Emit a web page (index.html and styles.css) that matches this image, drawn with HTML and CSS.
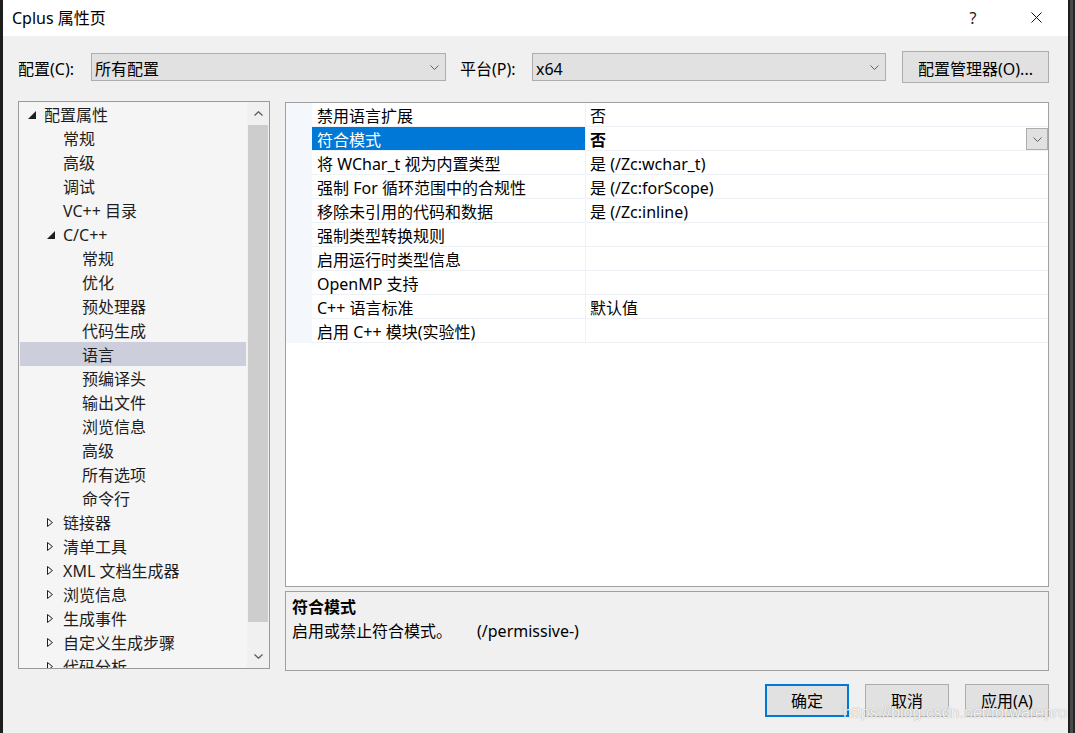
FILE: index.html
```html
<!DOCTYPE html>
<html lang="zh-CN">
<head>
<meta charset="UTF-8">
<title>Cplus 属性页</title>
<link rel="stylesheet" href="styles.css">
</head>
<body>

<div class="desktop">
  <div class="window">
    <div class="titlebar">
      <span class="title">Cplus 属性页</span>
      <span class="help">?</span>
      <span class="close">
        <svg width="11" height="11" viewBox="0 0 11 11"><path d="M0.5 0.5L10.5 10.5M10.5 0.5L0.5 10.5" stroke="#111" stroke-width="1" fill="none"/></svg>
      </span>
    </div>

    <div class="config-row">
      <span class="label">配置(C):</span>
      <div class="combo combo-config">
        <span class="combo-text">所有配置</span>
        <svg class="chev" width="9" height="5" viewBox="0 0 9 5"><path d="M0.5 0.5L4.5 4.5L8.5 0.5" fill="none" stroke="#606060"/></svg>
      </div>
      <span class="label platform-label">平台(P):</span>
      <div class="combo combo-platform">
        <span class="combo-text">x64</span>
        <svg class="chev" width="9" height="5" viewBox="0 0 9 5"><path d="M0.5 0.5L4.5 4.5L8.5 0.5" fill="none" stroke="#606060"/></svg>
      </div>
      <button class="btn btn-manager">配置管理器(O)...</button>
    </div>

    <div class="main">
      <div class="tree">
        <ul class="tree-list">
          <li class="node lv0"><span class="arrow"><svg width="8" height="8" viewBox="0 0 8 8"><path d="M8 0V8H0Z" fill="#1e1e1e"/></svg></span>配置属性</li>
          <li class="node lv1"><span class="arrow"></span>常规</li>
          <li class="node lv1"><span class="arrow"></span>高级</li>
          <li class="node lv1"><span class="arrow"></span>调试</li>
          <li class="node lv1"><span class="arrow"></span>VC++ 目录</li>
          <li class="node lv1"><span class="arrow"><svg width="8" height="8" viewBox="0 0 8 8"><path d="M8 0V8H0Z" fill="#1e1e1e"/></svg></span>C/C++</li>
          <li class="node lv2"><span class="arrow"></span>常规</li>
          <li class="node lv2"><span class="arrow"></span>优化</li>
          <li class="node lv2"><span class="arrow"></span>预处理器</li>
          <li class="node lv2"><span class="arrow"></span>代码生成</li>
          <li class="node lv2 selected"><span class="arrow"></span>语言</li>
          <li class="node lv2"><span class="arrow"></span>预编译头</li>
          <li class="node lv2"><span class="arrow"></span>输出文件</li>
          <li class="node lv2"><span class="arrow"></span>浏览信息</li>
          <li class="node lv2"><span class="arrow"></span>高级</li>
          <li class="node lv2"><span class="arrow"></span>所有选项</li>
          <li class="node lv2"><span class="arrow"></span>命令行</li>
          <li class="node lv1"><span class="arrow"><svg width="7" height="9" viewBox="0 0 7 9"><path d="M0.5 0.5L5.5 4.5L0.5 8.5Z" fill="none" stroke="#1e1e1e"/></svg></span>链接器</li>
          <li class="node lv1"><span class="arrow"><svg width="7" height="9" viewBox="0 0 7 9"><path d="M0.5 0.5L5.5 4.5L0.5 8.5Z" fill="none" stroke="#1e1e1e"/></svg></span>清单工具</li>
          <li class="node lv1"><span class="arrow"><svg width="7" height="9" viewBox="0 0 7 9"><path d="M0.5 0.5L5.5 4.5L0.5 8.5Z" fill="none" stroke="#1e1e1e"/></svg></span>XML 文档生成器</li>
          <li class="node lv1"><span class="arrow"><svg width="7" height="9" viewBox="0 0 7 9"><path d="M0.5 0.5L5.5 4.5L0.5 8.5Z" fill="none" stroke="#1e1e1e"/></svg></span>浏览信息</li>
          <li class="node lv1"><span class="arrow"><svg width="7" height="9" viewBox="0 0 7 9"><path d="M0.5 0.5L5.5 4.5L0.5 8.5Z" fill="none" stroke="#1e1e1e"/></svg></span>生成事件</li>
          <li class="node lv1"><span class="arrow"><svg width="7" height="9" viewBox="0 0 7 9"><path d="M0.5 0.5L5.5 4.5L0.5 8.5Z" fill="none" stroke="#1e1e1e"/></svg></span>自定义生成步骤</li>
          <li class="node lv1"><span class="arrow"><svg width="7" height="9" viewBox="0 0 7 9"><path d="M0.5 0.5L5.5 4.5L0.5 8.5Z" fill="none" stroke="#1e1e1e"/></svg></span>代码分析</li>
        </ul>
        <div class="vscroll">
          <div class="sb-btn"><svg width="9" height="5" viewBox="0 0 9 5"><path d="M0.5 4.5L4.5 0.8L8.5 4.5" fill="none" stroke="#606060" stroke-width="1.4"/></svg></div>
          <div class="sb-track"><div class="sb-thumb"></div></div>
          <div class="sb-btn"><svg width="9" height="5" viewBox="0 0 9 5"><path d="M0.5 0.5L4.5 4.2L8.5 0.5" fill="none" stroke="#606060" stroke-width="1.4"/></svg></div>
        </div>
      </div>

      <div class="right">
        <div class="grid">
          <div class="prop-row"><span class="gutter"></span><span class="name">禁用语言扩展</span><span class="value">否</span></div>
          <div class="prop-row active"><span class="gutter"></span><span class="name">符合模式</span><span class="value">否<span class="drop"><svg width="9" height="5" viewBox="0 0 9 5"><path d="M0.5 0.5L4.5 4.5L8.5 0.5" fill="none" stroke="#606060"/></svg></span></span></div>
          <div class="prop-row"><span class="gutter"></span><span class="name">将 WChar_t 视为内置类型</span><span class="value">是 (/Zc:wchar_t)</span></div>
          <div class="prop-row"><span class="gutter"></span><span class="name">强制 For 循环范围中的合规性</span><span class="value">是 (/Zc:forScope)</span></div>
          <div class="prop-row"><span class="gutter"></span><span class="name">移除未引用的代码和数据</span><span class="value">是 (/Zc:inline)</span></div>
          <div class="prop-row"><span class="gutter"></span><span class="name">强制类型转换规则</span><span class="value"></span></div>
          <div class="prop-row"><span class="gutter"></span><span class="name">启用运行时类型信息</span><span class="value"></span></div>
          <div class="prop-row"><span class="gutter"></span><span class="name">OpenMP 支持</span><span class="value"></span></div>
          <div class="prop-row"><span class="gutter"></span><span class="name">C++ 语言标准</span><span class="value">默认值</span></div>
          <div class="prop-row"><span class="gutter"></span><span class="name">启用 C++ 模块(实验性)</span><span class="value"></span></div>
        </div>
        <div class="desc">
          <div class="desc-title">符合模式</div>
          <div class="desc-text">启用或禁止符合模式。<span class="desc-switch">(/permissive-)</span></div>
        </div>
      </div>
    </div>

    <div class="actions">
      <button class="btn btn-action btn-default">确定</button>
      <button class="btn btn-action">取消</button>
      <button class="btn btn-action">应用(A)</button>
    </div>
  </div>

  <div class="watermark">https://blog.csdn.net/forwarepro</div>
</div>

</body>
</html>
```

FILE: styles.css
```css
/* General */
* {
  box-sizing: border-box;
}

body {
  margin: 0;
  background-color: #1e1e1e;
  font-family: "Noto Sans", "Noto Sans CJK SC", sans-serif;
  font-size: 16px;
  color: #000;
}

.desktop {
  position: relative;
  width: 1075px;
  height: 733px;
  overflow: hidden;
  background: linear-gradient(to right, #1e1e1e 1070px, #4a4a4a 1070px, #4a4a4a 1073px, #262626 1073px);
}

.window {
  margin-left: 3px;
  width: 1065px;
  height: 733px;
  background-color: #f0f0f0;
}

/* Title bar */
.titlebar {
  height: 36px;
  background-color: #fff;
  display: flex;
  align-items: center;
  padding: 0 0 1px 9px;
}

.title {
  flex: 1;
  line-height: 20px;
}

.help {
  width: 30px;
  margin-right: 25px;
  text-align: center;
  line-height: 20px;
  color: #222;
}

.close {
  width: 46px;
  margin-right: 9px;
  display: flex;
  justify-content: center;
}

/* Config row */
.config-row {
  display: flex;
  align-items: center;
  height: 32px;
  margin-top: 15px;
  padding-left: 15px;
}

.label {
  width: 73px;
  line-height: 20px;
  padding-top: 3px;
}

.platform-label {
  margin-left: 14px;
  width: 72px;
}

.combo {
  height: 28px;
  display: flex;
  align-items: center;
  background-color: #e1e1e1;
  border: 1px solid #adadad;
  padding: 0 6px 0 3px;
}

.combo-text {
  flex: 1;
  line-height: 20px;
  padding-top: 4px;
}

.combo-config {
  width: 355px;
}

.combo-platform {
  width: 354px;
}

.btn {
  font-family: inherit;
  font-size: 16px;
  color: #000;
  background-color: #e1e1e1;
  border: 1px solid #adadad;
  padding: 0;
  line-height: 20px;
}

.btn-manager {
  margin-left: 16px;
  width: 147px;
  height: 32px;
  padding-top: 3px;
}

/* Main area */
.main {
  display: flex;
  margin-top: 18px;
  padding-left: 15px;
  height: 570px;
}

.tree {
  width: 252px;
  height: 568px;
  border: 1px solid #9a9a9a;
  background-color: #f5f5f5;
  display: flex;
}

.tree-list {
  flex: 1;
  margin: 0;
  padding: 0;
  list-style: none;
  overflow: hidden;
}

.node {
  height: 24px;
  line-height: 24px;
  padding-top: 1px;
  margin: 0 1px;
  display: flex;
  align-items: center;
  white-space: nowrap;
  color: #1e1e1e;
}

.node.lv0 { padding-left: 8px; }
.node.lv1 { padding-left: 27px; }
.node.lv2 { padding-left: 46px; }

.node.selected {
  background-color: #cccedb;
}

.arrow {
  width: 16px;
  height: 23px;
  display: flex;
  align-items: center;
  flex-shrink: 0;
}

.arrow svg {
  display: block;
}

.vscroll {
  width: 22px;
  display: flex;
  flex-direction: column;
  background-color: #f0f0f0;
}

.sb-btn {
  height: 23px;
  display: flex;
  align-items: center;
  justify-content: center;
}

.sb-track {
  flex: 1;
}

.sb-thumb {
  height: 497px;
  margin: 0 1px;
  background-color: #cdcdcd;
}

/* Property grid */
.right {
  margin-left: 15px;
  margin-top: 1px;
  width: 764px;
  display: flex;
  flex-direction: column;
}

.grid {
  height: 485px;
  border: 1px solid #a0a0a0;
  background-color: #fff;
}

.prop-row {
  display: flex;
  height: 24px;
}

.gutter {
  width: 26px;
  background-color: #f4f7fb;
}

.name {
  width: 274px;
  padding-left: 5px;
  padding-top: 4px;
  line-height: 19px;
  border-right: 1px solid #eef1f6;
  border-bottom: 1px solid #eef1f6;
  white-space: nowrap;
}

.value {
  flex: 1;
  display: flex;
  padding-left: 4px;
  padding-top: 4px;
  line-height: 19px;
  border-bottom: 1px solid #eef1f6;
  white-space: nowrap;
}

.prop-row.active .name {
  background-color: #0078d7;
  color: #fff;
}

.prop-row.active .value {
  font-weight: bold;
}

.drop {
  margin-left: auto;
  margin-top: -3px;
  width: 22px;
  height: 22px;
  display: flex;
  align-items: center;
  justify-content: center;
  background-color: #e1e1e1;
  border: 1px solid #adadad;
}

/* Description */
.desc {
  margin-top: 4px;
  height: 80px;
  border: 1px solid #a0a0a0;
  padding: 3px 6px;
}

.desc-title {
  font-weight: bold;
  line-height: 24px;
}

.desc-text {
  line-height: 24px;
}

.desc-switch {
  margin-left: 25px;
}

/* Buttons */
.actions {
  display: flex;
  justify-content: flex-end;
  gap: 16px;
  margin-top: 13px;
  padding-right: 19px;
}

.btn-action {
  width: 84px;
  height: 33px;
}

.btn-default {
  border: 2px solid #0078d7;
}

.watermark {
  position: absolute;
  left: 843px;
  top: 703px;
  font-family: "Liberation Sans", Arial, sans-serif;
  font-size: 16px;
  line-height: 20px;
  color: rgba(255, 255, 255, 0.9);
  text-shadow: 0 0 1px rgba(0, 0, 0, 0.4);
  pointer-events: none;
}
```
